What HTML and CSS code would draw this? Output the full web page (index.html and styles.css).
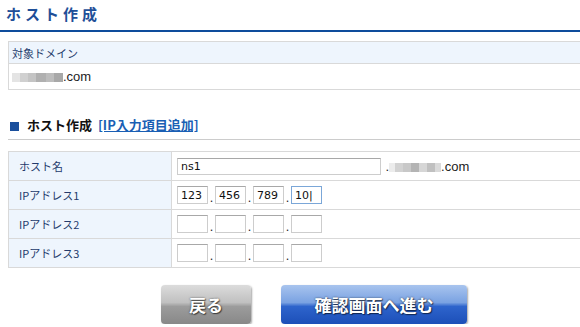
FILE: index.html
```html
<!DOCTYPE html>
<html lang="ja">
<head>
    <meta charset="UTF-8">
    <title>ホスト作成</title>
    <link rel="stylesheet" href="styles.css">
</head>
<body>
    <h1 class="page-title">ホスト作成</h1>

    <!-- target domain -->
    <div class="domain-box">
        <div class="domain-head">対象ドメイン</div>
        <div class="domain-value"><span class="blur"></span>.com</div>
    </div>

    <h2 class="section-title">
        <span class="square"></span>ホスト作成
        <a href="#" class="add-link">[IP入力項目追加]</a>
    </h2>

    <table class="form-table">
        <tr>
            <th>ホスト名</th>
            <td>
                <input type="text" class="host-input" value="ns1">
                <span class="suffix">.<span class="blur blur-short"></span>.com</span>
            </td>
        </tr>
        <tr>
            <th>IPアドレス1</th>
            <td>
                <input type="text" class="ip" value="123"><span class="dot">.</span><input type="text" class="ip" value="456"><span class="dot">.</span><input type="text" class="ip" value="789"><span class="dot">.</span><input type="text" class="ip focus" value="10|">
            </td>
        </tr>
        <tr>
            <th>IPアドレス2</th>
            <td>
                <input type="text" class="ip"><span class="dot">.</span><input type="text" class="ip"><span class="dot">.</span><input type="text" class="ip"><span class="dot">.</span><input type="text" class="ip">
            </td>
        </tr>
        <tr>
            <th>IPアドレス3</th>
            <td>
                <input type="text" class="ip"><span class="dot">.</span><input type="text" class="ip"><span class="dot">.</span><input type="text" class="ip"><span class="dot">.</span><input type="text" class="ip">
            </td>
        </tr>
    </table>

    <div class="buttons">
        <button class="btn btn-back">戻る</button>
        <button class="btn btn-next">確認画面へ進む</button>
    </div>
</body>
</html>
```

FILE: styles.css
```css
body {
    margin: 0;
    background-color: #ffffff;
    color: #222222;
    font-family: "Noto Sans CJK JP", "Liberation Sans", sans-serif;
    font-size: 11px;
    overflow: hidden;
}

.page-title {
    margin: 0;
    padding: 3px 0 5px 6px;
    height: 22px;
    line-height: 22px;
    font-size: 15px;
    font-weight: bold;
    letter-spacing: 4px;
    color: #1f4f98;
    border-bottom: 2px solid #0e4c9c;
}

.domain-box {
    margin: 9px 0 0 8px;
    border: 1px solid #d9d9d9;
    border-right: none;
}

.domain-head {
    height: 21px;
    line-height: 22px;
    padding-left: 3px;
    background-color: #eef5fd;
    border-bottom: 1px solid #d9d9d9;
    color: #233a6b;
}

.domain-value {
    height: 25px;
    line-height: 26px;
    padding-left: 3px;
    font-family: "Liberation Sans", Arial, sans-serif;
    font-size: 13px;
    color: #222;
}

.blur {
    display: inline-block;
    width: 51px;
    height: 9px;
    vertical-align: -1px;
    background: linear-gradient(90deg, #e4e4e4 0 8px, #d0d0d0 8px 16px, #c4c4c4 16px 24px, #b0b0b0 24px 34px, #bcbcbc 34px 42px, #a8a8a8 42px 51px);
}

.blur-short {
    width: 52px;
    background: linear-gradient(90deg, #ececec 0 6px, #d2d2d2 6px 14px, #c8c8c8 14px 22px, #b4b4b4 22px 30px, #d6d6d6 30px 38px, #c0c0c0 38px 46px, #dadada 46px 52px);
}

.section-title {
    margin: 26px 0 0 8px;
    padding: 0 0 6px 2px;
    height: 17px;
    line-height: 17px;
    font-size: 13px;
    font-weight: bold;
    color: #111;
    border-bottom: 1px solid #cccccc;
}

.square {
    display: inline-block;
    width: 9px;
    height: 9px;
    margin-right: 8px;
    background-color: #1a4f9c;
    vertical-align: -1px;
}

.add-link {
    margin-left: 3px;
    color: #1a5fb4;
    text-decoration: underline;
}

.form-table {
    margin: 11px 0 0 8px;
    width: calc(100% - 8px);
    border-collapse: collapse;
}

.form-table th,
.form-table td {
    height: 28px;
    padding: 0;
    border-top: 1px solid #d9d9d9;
    border-bottom: 1px solid #d9d9d9;
    vertical-align: middle;
}

.form-table th {
    width: 152px;
    padding-left: 10px;
    border-left: 1px solid #d9d9d9;
    border-right: 1px solid #d9d9d9;
    background-color: #eef5fd;
    text-align: left;
    font-weight: normal;
    color: #233a6b;
}

.form-table td {
    padding-left: 5px;
}

input {
    box-sizing: border-box;
    margin: 0;
    padding: 0 3px;
    height: 17px;
    border: 1px solid #cdcdcd;
    border-top-color: #a8a8a8;
    font-family: "DejaVu Sans", sans-serif;
    font-size: 11px;
    color: #111;
    vertical-align: middle;
}

.host-input {
    width: 204px;
}

.suffix {
    margin-left: 2px;
    font-family: "Liberation Sans", Arial, sans-serif;
    font-size: 13px;
    vertical-align: middle;
}

.ip {
    width: 31px;
    height: 18px;
}

.ip.focus {
    border-color: #7ba7d8;
}

.dot {
    display: inline-block;
    width: 7px;
    text-align: center;
    vertical-align: -4px;
}

.buttons {
    display: flex;
    gap: 30px;
    padding: 17px 0 0 161px;
}

.btn {
    height: 39px;
    border: none;
    border-radius: 4px;
    font-family: "Noto Sans CJK JP", sans-serif;
    font-size: 17px;
    font-weight: bold;
    color: #ffffff;
    text-shadow: 0 0 2px rgba(0, 0, 0, 0.6), 1px 1px 1px rgba(0, 0, 0, 0.5);
    box-shadow: 1px 1px 2px rgba(0, 0, 0, 0.35);
    padding: 0;
}

.btn-back {
    width: 90px;
    background: linear-gradient(#dcdcdc, #c0c0c0 45%, #9c9c9c 55%, #888888);
}

.btn-next {
    width: 186px;
    background: linear-gradient(#a8c4ee, #7aa2e2 45%, #2e64cc 55%, #1c4fb8);
}
```
